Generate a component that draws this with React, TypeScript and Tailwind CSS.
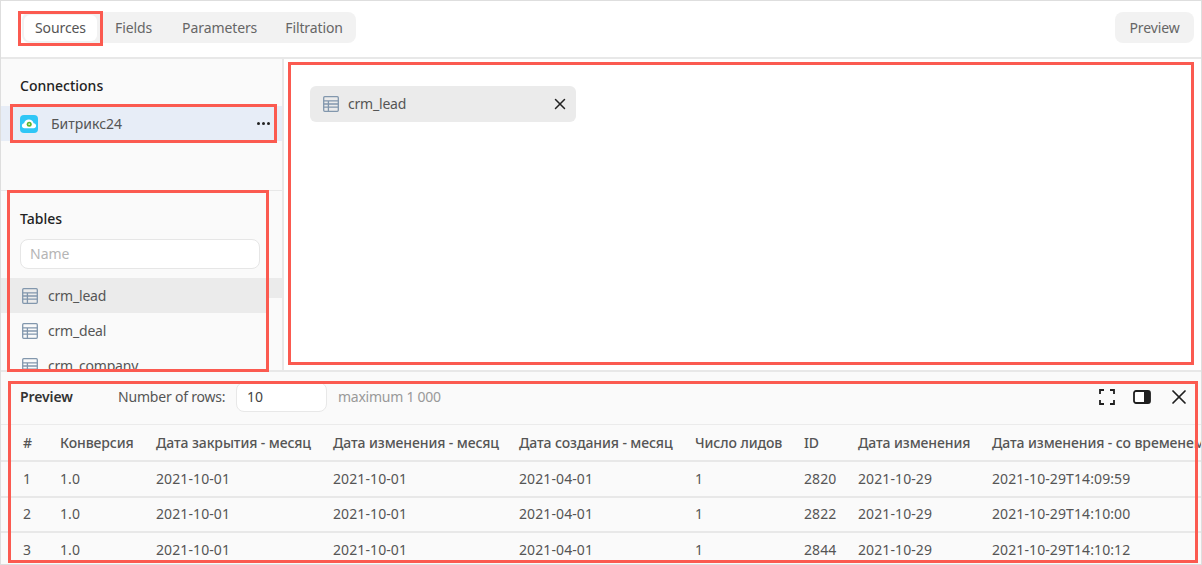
import { X } from 'lucide-react';

const tabs = [
  { name: 'Sources', cls: 'shrink-0 h-[26px] w-[73px] rounded-md bg-white flex items-center justify-center text-[#555] mr-[18px]' },
  { name: 'Fields', cls: 'shrink-0 mr-[30px] text-[#666]' },
  { name: 'Parameters', cls: 'shrink-0 mr-[28px] text-[#666]' },
  { name: 'Filtration', cls: 'shrink-0 text-[#666]' },
];

const columns = [
  '#',
  'Конверсия',
  'Дата закрытия - месяц',
  'Дата изменения - месяц',
  'Дата создания - месяц',
  'Число лидов',
  'ID',
  'Дата изменения',
  'Дата изменения - со временем',
];

const rows = [
  ['1', '1.0', '2021-10-01', '2021-10-01', '2021-04-01', '1', '2820', '2021-10-29', '2021-10-29T14:09:59'],
  ['2', '1.0', '2021-10-01', '2021-10-01', '2021-04-01', '1', '2822', '2021-10-29', '2021-10-29T14:10:00'],
  ['3', '1.0', '2021-10-01', '2021-10-01', '2021-04-01', '1', '2844', '2021-10-29', '2021-10-29T14:10:12'],
];

const gridCols = 'grid grid-cols-[37px_96px_177px_186px_176px_109px_54px_134px_300px] items-center pl-[22px] whitespace-nowrap';

function TableIcon() {
  return (
    <svg width="16" height="16" viewBox="0 0 16 16" fill="none" stroke="#8297ad" strokeWidth="1.3" className="shrink-0">
      <rect x="0.7" y="0.7" width="14.6" height="14.6" rx="1" />
      <path d="M0.7 4.9H15.3M0.7 8H15.3M0.7 11.2H15.3M5.4 4.9V15.3" />
    </svg>
  );
}

function BitrixLogo() {
  return (
    <svg width="18" height="18" viewBox="0 0 18 18" className="shrink-0">
      <rect width="18" height="18" rx="4" fill="#2fc6f6" />
      <path d="M4.5 13.2C2.9 13.2 1.9 12 1.9 10.7C1.9 9.4 2.9 8.4 4.1 8.3C4.5 6 6.5 4.5 8.8 4.5C11.2 4.5 13.2 6.2 13.6 8.2C15 8.3 16.1 9.4 16.1 10.8C16.1 12.1 15.1 13.2 13.6 13.2Z" fill="#fff" />
      <circle cx="9.2" cy="9.2" r="2.5" fill="#5cb531" />
      <circle cx="9.2" cy="9.2" r="0.9" fill="#d9f2c8" />
    </svg>
  );
}

function FullscreenIcon() {
  return (
    <svg width="16" height="16" viewBox="0 0 16 16" fill="none" stroke="#1f1f1f" strokeWidth="1.8" className="shrink-0">
      <path d="M1 5V1H5M11 1H15V5M15 11V15H11M5 15H1V11" />
    </svg>
  );
}

function PanelIcon() {
  return (
    <svg width="18" height="14" viewBox="0 0 18 14" className="shrink-0">
      <rect x="1" y="1" width="16" height="12" rx="2" fill="#fff" stroke="#1f1f1f" strokeWidth="1.8" />
      <path d="M11 1H15A2 2 0 0 1 17 3V11A2 2 0 0 1 15 13H11Z" fill="#1f1f1f" />
    </svg>
  );
}

function Outline({ className }: { className: string }) {
  return <div className={`absolute border-[3px] border-[#fb5a50] pointer-events-none ${className}`} />;
}

export default function App() {
  return (
    <div className="relative w-[1202px] h-[565px] overflow-hidden bg-white border border-[#dedede] font-['Noto_Sans',sans-serif] text-sm text-[#4d4d4d] flex flex-col">
      {/* top bar */}
      <div className="h-[58px] shrink-0 border-b-2 border-[#e8e8e8] flex items-start justify-between pt-[11px] pl-[21px] pr-[7px]">
        <div className="flex items-center h-[31px] w-[334px] bg-[#f2f2f2] rounded-lg pl-[2px] tracking-[-0.1px]">
          {tabs.map((tab) => (
            <div key={tab.name} className={tab.cls}>
              {tab.name}
            </div>
          ))}
        </div>
        <div className="h-[31px] w-[79px] bg-[#f2f2f2] rounded-lg flex items-center justify-center text-[#666] tracking-[-0.1px]">Preview</div>
      </div>

      {/* middle */}
      <div className="h-[311px] shrink-0 flex">
        <div className="w-[283px] shrink-0 bg-[#fafafa] border-r-2 border-[#e8e8e8] flex flex-col overflow-hidden">
          <div className="h-[132px] shrink-0 border-b border-[#e8e8e8]">
            <div className="pl-[19px] pt-[17px] h-[47px] font-medium text-[#222]">Connections</div>
            <div className="h-[35px] bg-[#e7edf7] flex items-center pl-[19px] pr-[12px]">
              <BitrixLogo />
              <span className="ml-[13px] text-[#555]">Битрикс24</span>
              <span className="ml-auto flex gap-[2px]">
                <i className="w-[3px] h-[3px] rounded-full bg-[#222]" />
                <i className="w-[3px] h-[3px] rounded-full bg-[#222]" />
                <i className="w-[3px] h-[3px] rounded-full bg-[#222]" />
              </span>
            </div>
          </div>
          <div className="pl-[19px] pt-[18px] h-[48px] shrink-0 font-medium text-[#222]">Tables</div>
          <div className="ml-[19px] w-[240px] h-[30px] shrink-0 rounded-lg border border-[#e6e6e6] bg-white flex items-center pl-[9px] text-[#b5b5b5]">Name</div>
          <div className="relative mt-[9px] h-[35px] shrink-0 w-[267px] bg-[#ebebeb] flex items-center pl-[21px] gap-[10px] text-[#555] tracking-[-0.2px]">
            <TableIcon />
            crm_lead
            <div className="absolute left-[267px] top-0 h-[20px] w-[14px] bg-[#ebebeb]" />
          </div>
          <div className="h-[35px] shrink-0 flex items-center pl-[21px] gap-[10px] text-[#555] tracking-[-0.2px]">
            <TableIcon />
            crm_deal
          </div>
          <div className="h-[35px] shrink-0 flex items-center pl-[21px] gap-[10px] text-[#555] tracking-[-0.2px]">
            <TableIcon />
            crm_company
          </div>
        </div>
        <div className="flex-1 pl-[26px] pt-[27px]">
          <div className="w-[266px] h-[36px] bg-[#ebebeb] rounded-md flex items-center pl-[13px] pr-[7px] gap-[9px] text-[#555] tracking-[-0.2px]">
            <TableIcon />
            crm_lead
            <X size={18} strokeWidth={2} color="#222" className="ml-auto" />
          </div>
        </div>
      </div>

      {/* preview */}
      <div className="flex-1 border-t-2 border-[#e8e8e8] bg-[#fafafa] overflow-hidden">
        <div className="h-[53px] flex items-start pt-[10px] pl-[19px] pr-[10px] border-b border-[#ebebeb]">
          <div className="h-[30px] w-[98px] shrink-0 flex items-center font-semibold text-[#333] tracking-[-0.1px]">Preview</div>
          <div className="h-[30px] w-[118px] shrink-0 flex items-center text-[#555] tracking-[-0.2px]">Number of rows:</div>
          <div className="h-[30px] w-[91px] shrink-0 rounded-lg border border-[#e8e8e8] bg-white flex items-center pl-[10px] text-[#444]">10</div>
          <div className="ml-[11px] h-[30px] flex items-center text-[#999] tracking-[-0.25px]">maximum 1 000</div>
          <div className="ml-auto h-[30px] flex items-center">
            <FullscreenIcon />
            <div className="ml-[18px]">
              <PanelIcon />
            </div>
            <X size={24} strokeWidth={1.7} color="#1f1f1f" className="ml-[16px]" />
          </div>
        </div>
        <div className={`${gridCols} h-[37px] border-b-2 border-[#e8e8e8] font-medium text-[#555] tracking-[-0.1px]`}>
          {columns.map((c) => (
            <div key={c}>{c}</div>
          ))}
        </div>
        {rows.map((row) => (
          <div key={row[0]} className={`${gridCols} h-[35.5px] border-b-2 border-[#e8e8e8] text-[#555] tracking-[0.1px]`}>
            {row.map((v, i) => (
              <div key={i}>{v}</div>
            ))}
          </div>
        ))}
      </div>

      {/* highlight frames drawn over the screen */}
      <Outline className="left-[17px] top-[10px] w-[85px] h-[35px]" />
      <Outline className="left-[9px] top-[103px] w-[267px] h-[39px]" />
      <Outline className="left-[6px] top-[189px] w-[262px] h-[182px]" />
      <Outline className="left-[287px] top-[61px] w-[906px] h-[303px]" />
      <Outline className="left-[7px] top-[380px] w-[1190px] h-[182px]" />
    </div>
  );
}
